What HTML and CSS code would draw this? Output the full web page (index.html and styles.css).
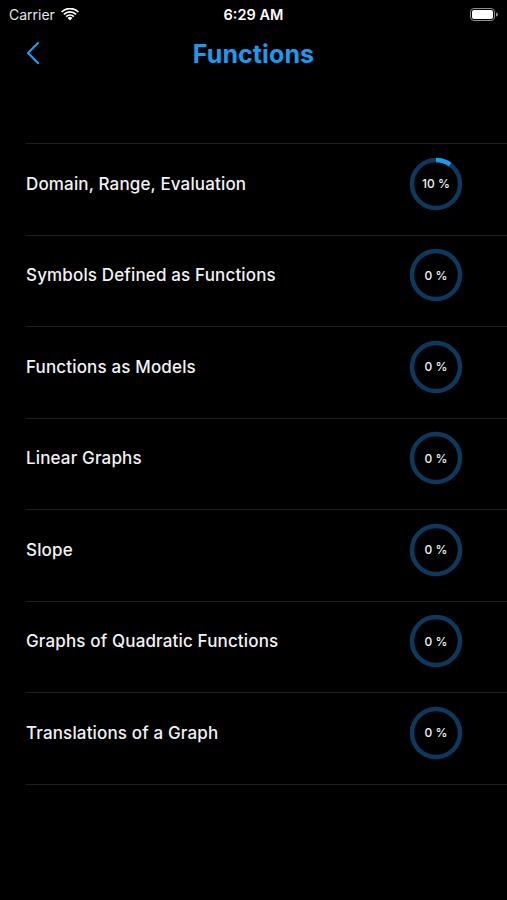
FILE: index.html
```html
<!DOCTYPE html>
<html>
<head>
  <title>Functions</title>
  <link rel="stylesheet" href="styles.css">
</head>
<body>

  <div class="status-bar">
    <div class="status-left">
      <span>Carrier</span>
      <svg class="wifi" width="18" height="13" viewBox="0 0 18 13">
        <path d="M9 12.5 L6.6 10 A3.4 3.4 0 0 1 11.4 10 Z" fill="#fff"/>
        <path d="M4.6 8 A6.2 6.2 0 0 1 13.4 8 L12.2 9.2 A4.5 4.5 0 0 0 5.8 9.2 Z" fill="#fff"/>
        <path d="M2.3 5.7 A9.5 9.5 0 0 1 15.7 5.7 L14.5 6.9 A7.8 7.8 0 0 0 3.5 6.9 Z" fill="#fff"/>
        <path d="M0 3.4 A12.8 12.8 0 0 1 18 3.4 L16.8 4.6 A11.1 11.1 0 0 0 1.2 4.6 Z" fill="#fff"/>
      </svg>
    </div>
    <div class="status-time">6:29 AM</div>
    <div class="status-right">
      <svg width="28" height="13" viewBox="0 0 28 13">
        <rect x="0.5" y="0.5" width="24" height="12" rx="3.5" fill="none" stroke="#8e8e93" stroke-width="1"/>
        <rect x="2" y="2" width="21" height="9" rx="2" fill="#fff"/>
        <path d="M26 4.5 A2 2 0 0 1 26 8.5 Z" fill="#8e8e93"/>
      </svg>
    </div>
  </div>

  <div class="nav-bar">
    <svg class="back" width="14" height="24" viewBox="0 0 14 24">
      <path d="M12 2 L2 12 L12 22" fill="none" stroke="#1a9bef" stroke-width="2.2" stroke-linecap="round" stroke-linejoin="round"/>
    </svg>
    <h1>Functions</h1>
  </div>

  <ul class="topic-list" id="topics"></ul>

  <script>
    const topics = [
      { name: "Domain, Range, Evaluation", progress: 10 },
      { name: "Symbols Defined as Functions", progress: 0 },
      { name: "Functions as Models", progress: 0 },
      { name: "Linear Graphs", progress: 0 },
      { name: "Slope", progress: 0 },
      { name: "Graphs of Quadratic Functions", progress: 0 },
      { name: "Translations of a Graph", progress: 0 }
    ];

    const list = document.getElementById("topics");
    const r = 24;
    const circ = 2 * Math.PI * r;

    topics.forEach(topic => {
      const li = document.createElement("li");
      li.className = "topic-row";
      const dash = circ * topic.progress / 100;
      li.innerHTML = `
        <span class="topic-name">${topic.name}</span>
        <div class="ring">
          <svg width="54" height="54" viewBox="0 0 54 54">
            <circle cx="27" cy="27" r="${r}" class="ring-track"/>
            <circle cx="27" cy="27" r="${r}" class="ring-fill"
              stroke-dasharray="${dash} ${circ}" transform="rotate(-90 27 27)"/>
          </svg>
          <span class="ring-label">${topic.progress} %</span>
        </div>
      `;
      list.appendChild(li);
    });
  </script>

</body>
</html>
```

FILE: styles.css
```css
body {
  margin: 0;
  background: #000;
  color: #fff;
  font-family: Inter, "Noto Sans", sans-serif;
  width: 507px;
  height: 900px;
  overflow: hidden;
}

.status-bar {
  height: 28px;
  display: flex;
  align-items: center;
  justify-content: space-between;
  padding: 0 9px;
  font-size: 14px;
}

.status-left {
  display: flex;
  align-items: center;
  gap: 6px;
  width: 100px;
  color: #e5e5ea;
}

.status-time {
  font-weight: 600;
  font-size: 14.5px;
}

.status-right {
  width: 100px;
  display: flex;
  justify-content: flex-end;
}

.nav-bar {
  height: 52px;
  display: flex;
  align-items: center;
  justify-content: center;
  position: relative;
}

.nav-bar .back {
  position: absolute;
  left: 26px;
  top: 13px;
}

.nav-bar h1 {
  margin: 0;
  font-size: 25px;
  font-weight: 700;
  color: #1a9bef;
  letter-spacing: 0.1px;
}

.topic-list {
  list-style: none;
  margin: 63px 0 0 26px;
  padding: 0;
  border-top: 1px solid #1e1e20;
}

.topic-row {
  height: 91.5px;
  border-bottom: 1px solid #1e1e20;
  display: flex;
  align-items: center;
  justify-content: space-between;
  padding-right: 44px;
  box-sizing: border-box;
  padding-bottom: 11px;
}

.topic-name {
  font-size: 17px;
  font-weight: 500;
  letter-spacing: 0.15px;
  color: #f2f2f7;
}

.ring {
  position: relative;
  width: 54px;
  height: 54px;
}

.ring svg {
  display: block;
}

.ring-track {
  fill: none;
  stroke: #0c3a5e;
  stroke-width: 4.5;
}

.ring-fill {
  fill: none;
  stroke: #1a9bef;
  stroke-width: 4.5;
}

.ring-label {
  position: absolute;
  inset: 0;
  display: flex;
  align-items: center;
  justify-content: center;
  font-size: 12px;
  font-weight: 500;
  color: #f2f2f7;
}
```
